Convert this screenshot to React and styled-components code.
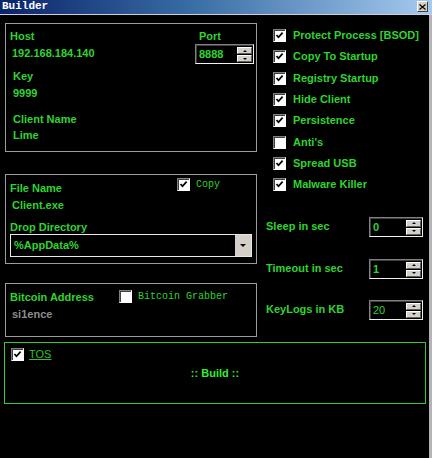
import React from "react";
import styled, { createGlobalStyle } from "styled-components";

const GREEN = "#2fd42f";

const GlobalStyle = createGlobalStyle`
  body {
    margin: 0;
    background: #000;
  }
  * {
    box-sizing: border-box;
  }
`;

const Window = styled.div`
  width: 432px;
  height: 458px;
  background: #000;
  display: flex;
  flex-direction: column;
  overflow: hidden;
`;

const TitleBar = styled.div`
  height: 15px;
  display: flex;
  align-items: center;
  justify-content: space-between;
  padding: 0 4px 1px 2px;
  background: linear-gradient(to right, #0a246a 0%, #3a6ea5 45%, #a6caf0 100%);
  border-bottom: 1px solid #c8d0dc;
`;

const Title = styled.span`
  color: #fff;
  font: bold 11px/13px "Liberation Mono", monospace;
`;

const CloseButton = styled.div`
  width: 11px;
  height: 11px;
  display: flex;
  align-items: center;
  justify-content: center;
  background: #d4d0c8;
  border: 1px solid;
  border-color: #fff #404040 #404040 #fff;
`;

const Body = styled.div`
  flex: 1;
  display: grid;
  grid-template-columns: 252px 1fr;
  align-content: start;
  padding: 8px 0 0 5px;
  border-right: 3px solid #b4b4b4;
`;

const LeftCol = styled.div`
  display: flex;
  flex-direction: column;
`;

const RightCol = styled.div`
  display: flex;
  flex-direction: column;
  padding: 2px 0 0 9px;
`;

const Panel = styled.div`
  height: ${(p) => p.$h}px;
  margin-top: ${(p) => p.$mt || 0}px;
  border: 1px solid #9c9c9c;
  padding: ${(p) => p.$pad};
`;

const HostPanel = styled(Panel)`
  display: flex;
  justify-content: space-between;
`;

const Stack = styled.div`
  display: flex;
  flex-direction: column;
`;

const Label = styled.div`
  color: ${(p) => p.$color || GREEN};
  font: ${(p) => (p.$light ? "normal" : "bold")} 11px/13px "Liberation Sans", Arial, sans-serif;
  margin-top: ${(p) => p.$mt || 0}px;
  padding-left: ${(p) => p.$pl || 0}px;
  white-space: nowrap;
`;

const MonoLabel = styled.span`
  color: ${GREEN};
  font: 10px/13px "Liberation Mono", monospace;
`;

const HeaderRow = styled.div`
  display: grid;
  grid-template-columns: ${(p) => p.$first}px auto;
  align-items: start;
`;

const OptionWrap = styled.div`
  display: flex;
  align-items: center;
  gap: 6px;
`;

const Box = styled.div`
  width: 13px;
  height: 13px;
  flex: none;
  display: flex;
  align-items: center;
  justify-content: center;
  background: #fff;
  border: 1px solid;
  border-color: #808080 #fff #fff #808080;
  box-shadow: inset 1px 1px #404040;
`;

const Spinner = styled.div`
  width: ${(p) => p.$w}px;
  height: 20px;
  margin-top: ${(p) => p.$mt || 0}px;
  display: flex;
  align-items: stretch;
  background: #000;
  border: 1px solid;
  border-color: #808080 #f0f0f0 #f0f0f0 #808080;
  box-shadow: inset 1px 1px #404040;
`;

const SpinValue = styled.div`
  flex: 1;
  padding: 3px 0 0 3px;
  color: ${GREEN};
  font: ${(p) => (p.$light ? "normal" : "bold")} 11px/13px "Liberation Sans", Arial, sans-serif;
`;

const SpinButtons = styled.div`
  width: 16px;
  display: flex;
  flex-direction: column;
  gap: 1px;
  padding: 2px 1px 1px 0;
`;

const SpinButton = styled.div`
  flex: 1;
  display: flex;
  align-items: center;
  justify-content: center;
  background: #d4d0c8;
  border: 1px solid;
  border-color: #fff #606060 #606060 #fff;
`;

const Tri = styled.div`
  width: 0;
  height: 0;
  border-left: ${(p) => p.$s || 2}px solid transparent;
  border-right: ${(p) => p.$s || 2}px solid transparent;
  ${(p) =>
    p.$up
      ? `border-bottom: ${p.$s || 2}px solid #000;`
      : `border-top: ${p.$s || 2}px solid #000;`}
`;

const Dropdown = styled.div`
  height: 23px;
  width: 242px;
  display: flex;
  border: 1px solid #e8e8e8;
  background: #000;
`;

const DropValue = styled.div`
  flex: 1;
  padding: 4px 0 0 3px;
  color: ${GREEN};
  font: bold 11px/13px "Liberation Sans", Arial, sans-serif;
`;

const DropButton = styled.div`
  width: 16px;
  display: flex;
  align-items: center;
  justify-content: center;
  background: #d4d0c8;
`;

const CheckList = styled.div`
  display: flex;
  flex-direction: column;
  padding-left: 7px;
`;

const CheckRow = styled.div`
  height: 21.33px;
  display: flex;
  align-items: center;
  gap: 7px;
`;

const SpinRow = styled.div`
  display: grid;
  grid-template-columns: 103px 54px;
  align-items: center;
  margin-top: ${(p) => p.$mt}px;
`;

const BuildPanel = styled.div`
  grid-column: 1 / -1;
  width: 422px;
  height: 62px;
  margin: 5px 0 0 -1px;
  border: 1px solid #33cc33;
  padding: 5px 0 0 6px;
`;

const TosRow = styled.div`
  display: flex;
  align-items: center;
  gap: 5px;
`;

const TosLink = styled.span`
  color: #2cc42c;
  font: 11px/13px "Liberation Sans", Arial, sans-serif;
  text-decoration: underline;
`;

const BuildText = styled.div`
  margin: 6px 0 0 -6px;
  text-align: center;
  color: #33ee33;
  font: bold 11px/13px "Liberation Sans", Arial, sans-serif;
`;

const Check = ({ checked }) => (
  <Box>
    {checked && (
      <svg width="9" height="9" viewBox="0 0 9 9">
        <path d="M1.5 4 L3.5 6.3 L7.6 1.6" fill="none" stroke="#000" strokeWidth="1.7" />
      </svg>
    )}
  </Box>
);

const Spin = ({ value, w, mt, light }) => (
  <Spinner $w={w} $mt={mt}>
    <SpinValue $light={light}>{value}</SpinValue>
    <SpinButtons>
      <SpinButton>
        <Tri $up />
      </SpinButton>
      <SpinButton>
        <Tri />
      </SpinButton>
    </SpinButtons>
  </Spinner>
);

const options = [
  ["Protect Process [BSOD]", true],
  ["Copy To Startup", true],
  ["Registry Startup", true],
  ["Hide Client", true],
  ["Persistence", true],
  ["Anti's", false],
  ["Spread USB", true],
  ["Malware Killer", true],
];

const timings = [
  ["Sleep in sec", "0", 21, false],
  ["Timeout in sec", "1", 22, false],
  ["KeyLogs in KB", "20", 21, true],
];

export default function App() {
  return (
    <Window>
      <GlobalStyle />
      <TitleBar>
        <Title>Builder</Title>
        <CloseButton>
          <svg width="7" height="6" viewBox="0 0 7 6">
            <path d="M0.5 0.5 L6.5 5.5 M6.5 0.5 L0.5 5.5" stroke="#000" strokeWidth="1.2" />
          </svg>
        </CloseButton>
      </TitleBar>
      <Body>
        <LeftCol>
          <HostPanel $h={129} $pad="6px 2px 0 4px">
            <Stack>
              <Label>Host</Label>
              <Label $mt={4} $pl={2}>192.168.184.140</Label>
              <Label $mt={10} $pl={3}>Key</Label>
              <Label $mt={4} $pl={3}>9999</Label>
              <Label $mt={13} $pl={3}>Client Name</Label>
              <Label $mt={3} $pl={3}>Lime</Label>
            </Stack>
            <Stack>
              <Label $pl={4}>Port</Label>
              <Spin value="8888" w={59} mt={1} />
            </Stack>
          </HostPanel>

          <Panel $h={90} $mt={22} $pad="3px 0 0 4px">
            <HeaderRow $first={167}>
              <Label $mt={4}>File Name</Label>
              <OptionWrap>
                <Check checked />
                <MonoLabel>Copy</MonoLabel>
              </OptionWrap>
            </HeaderRow>
            <Label $mt={4} $pl={2}>Client.exe</Label>
            <Label $mt={9}>Drop Directory</Label>
            <Dropdown>
              <DropValue>%AppData%</DropValue>
              <DropButton>
                <Tri $s={3} />
              </DropButton>
            </Dropdown>
          </Panel>

          <Panel $h={54} $mt={19} $pad="6px 0 0 4px">
            <HeaderRow $first={109}>
              <Label $mt={1}>Bitcoin Address</Label>
              <OptionWrap>
                <Check />
                <MonoLabel>Bitcoin Grabber</MonoLabel>
              </OptionWrap>
            </HeaderRow>
            <Label $mt={4} $pl={2} $color="#8c8c8c">si1ence</Label>
          </Panel>
        </LeftCol>

        <RightCol>
          <CheckList>
            {options.map(([name, on]) => (
              <CheckRow key={name}>
                <Check checked={on} />
                <Label>{name}</Label>
              </CheckRow>
            ))}
          </CheckList>
          {timings.map(([name, value, mt, light]) => (
            <SpinRow key={name} $mt={mt}>
              <Label>{name}</Label>
              <Spin value={value} w={54} light={light} />
            </SpinRow>
          ))}
        </RightCol>

        <BuildPanel>
          <TosRow>
            <Check checked />
            <TosLink>TOS</TosLink>
          </TosRow>
          <BuildText>:: Build ::</BuildText>
        </BuildPanel>
      </Body>
    </Window>
  );
}
